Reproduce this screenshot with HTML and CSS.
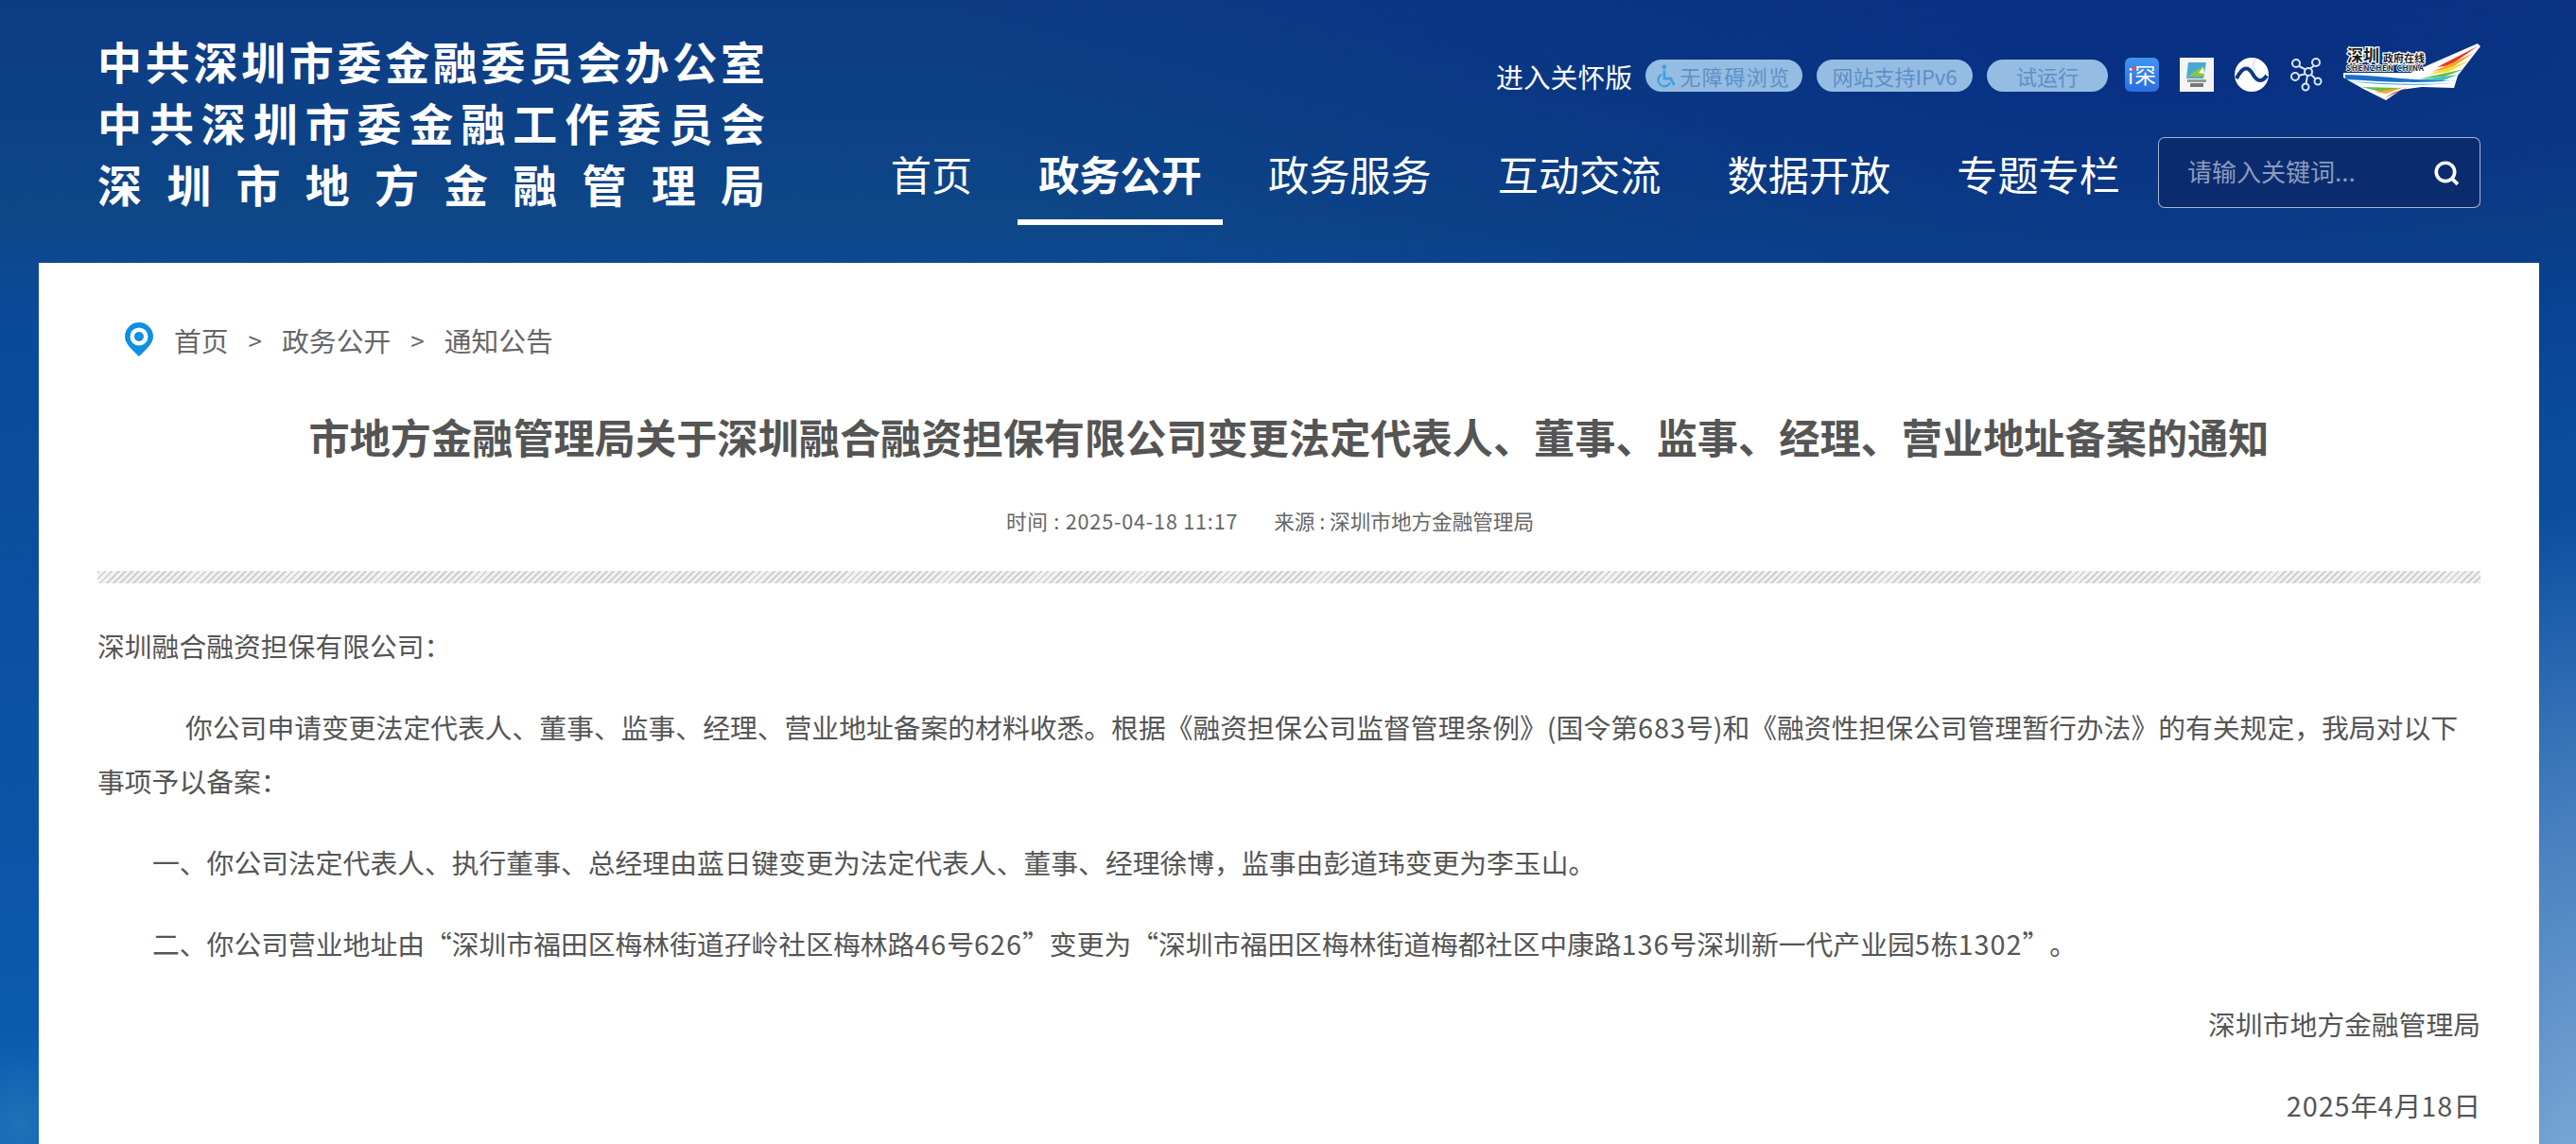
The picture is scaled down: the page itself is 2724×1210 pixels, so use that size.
FILE: index.html
```html
<!DOCTYPE html>
<html lang="zh-CN">
<head>
    <meta charset="UTF-8">
    <meta name="viewport" content="width=device-width, initial-scale=1.0">
    <title>市地方金融管理局关于深圳融合融资担保有限公司变更法定代表人、董事、监事、经理、营业地址备案的通知</title>
    <link rel="stylesheet" href="styles.css">
</head>
<body>
    <header class="header">
        <div class="site-name">
            <div>中共深圳市委金融委员会办公室</div>
            <div>中共深圳市委金融工作委员会</div>
            <div>深圳市地方金融管理局</div>
        </div>
        <div class="header-right">
            <div class="tools">
                <a class="care-link">进入关怀版</a>
                <span class="pill pill-first">
                    <svg class="wheelchair" viewBox="0 0 24 28"><circle cx="9" cy="3" r="2.6" fill="#3f9fe0"/><path d="M9 7v10h8l4 8" fill="none" stroke="#3f9fe0" stroke-width="3"/><path d="M6 12a7.500 7.500 0 1 0 10 10" fill="none" stroke="#3f9fe0" stroke-width="2.600"/></svg>
                    无障碍浏览
                </span>
                <span class="pill pill-second">网站支持IPv6</span>
                <span class="pill pill-last">试运行</span>
                <span class="app-icon app-blue"><span class="app-dot"></span>i<span class="app-char">罙</span></span>
                <svg class="app-icon" viewBox="0 0 36 36"><rect width="36" height="36" fill="#f4f4f2"/><path d="M9 5h19l-3 17H7z" fill="#4aa8d8"/><path d="M8 20L24 9l2 11z" fill="#8cc63f"/><path d="M20 16l5-6 1 7z" fill="#fff"/><rect x="8" y="23" width="20" height="3" fill="#9a9a9a"/><rect x="11" y="27" width="14" height="4" fill="#777"/></svg>
                <svg class="app-icon" viewBox="0 0 36 36"><circle cx="18" cy="18" r="18" fill="#fff"/><path d="M2 22C8 10 14 8 19 17s10 9 15 2" fill="none" stroke="#0b3a86" stroke-width="4"/><path d="M22 1c-4 6-3 10 1 14" fill="none" stroke="#dfe8f4" stroke-width="2"/></svg>
                <svg class="app-icon" viewBox="0 0 36 36" fill="none" stroke="#dbe6f4" stroke-width="2"><circle cx="20" cy="15" r="4"/><circle cx="7" cy="6" r="4"/><circle cx="28" cy="5" r="4"/><circle cx="6" cy="20" r="4"/><circle cx="30" cy="25" r="3.500"/><circle cx="17" cy="31" r="3.500"/><path d="M10 9l7 3.500M26 8.500l-4 3M10 19l7-2M23 18l5 5M19 19l-1.500 8.500"/></svg>
                <svg class="city-logo" viewBox="0 0 146 60">
                    <path d="M1 31H72L143 0 146 3 122 34 118 47 84 46 62 49 46 60 22 48 1 36z" fill="#fff"/>
                    <path d="M143 3L100 25l14-2z" fill="#e8342c"/>
                    <path d="M139 10L95 30l20-4z" fill="#f6a623"/>
                    <path d="M135 18L90 33l22-3z" fill="#f5dd3a"/>
                    <path d="M129 27L82 37l26-2z" fill="#6cbd45"/>
                    <path d="M122 33L74 39l30 1z" fill="#3fc0c8"/>
                    <path d="M3 33c36 0 76 8 113 6-36 4-78 1-113-1z" fill="#1b6fc9"/>
                    <path d="M8 40c30 2 70 4 108 2-30 3-80 2-108-2z" fill="#35a7e0"/>
                    <path d="M20 46l42 1-22 4z" fill="#6cbd45"/>
                    <path d="M34 51l32-5-20 7z" fill="#f6a623"/>
                    <path d="M44 58l26-12-16 6z" fill="#e8342c"/>
                    <text class="logo-cn" x="5" y="19">深圳</text>
                    <text class="logo-small" x="43" y="20">政府在线</text>
                    <text class="logo-en" x="4" y="29" textLength="82">SHENZHEN CHINA</text>
                </svg>
            </div>
            <div class="nav-row">
                <nav class="nav">
                    <a class="nav-item">首页</a>
                    <a class="nav-item active">政务公开</a>
                    <a class="nav-item">政务服务</a>
                    <a class="nav-item">互动交流</a>
                    <a class="nav-item">数据开放</a>
                    <a class="nav-item">专题专栏</a>
                </nav>
                <div class="search">
                    <span class="search-text">请输入关键词...</span>
                    <svg class="search-icon" viewBox="0 0 26 26" fill="none" stroke="#fff" stroke-width="3.400"><circle cx="12" cy="12" r="9"/><path d="M18 18l6 6"/></svg>
                </div>
            </div>
        </div>
    </header>

    <main class="card">
        <div class="crumbs">
            <svg class="pin" viewBox="0 0 30 36"><path d="M15 0a15 15 0 0 1 15 15c0 8-9 15-15 21C9 30 0 23 0 15A15 15 0 0 1 15 0z" fill="#0d8fe3"/><circle cx="15" cy="15" r="9.500" fill="#fff"/><circle cx="15" cy="15" r="5" fill="#0d8fe3"/></svg>
            <span>首页</span><span class="sep">&gt;</span><span>政务公开</span><span class="sep">&gt;</span><span>通知公告</span>
        </div>
        <h1 class="title">市地方金融管理局关于深圳融合融资担保有限公司变更法定代表人、董事、监事、经理、营业地址备案的通知</h1>
        <div class="meta">
            <span class="meta-time">时间 : 2025-04-18 11:17</span>
            <span>来源 : 深圳市地方金融管理局</span>
        </div>
        <div class="stripe"></div>
        <article class="article">
            <p>深圳融合融资担保有限公司：</p>
            <p class="indent-wide">你公司申请变更法定代表人、董事、监事、经理、营业地址备案的材料收悉。根据《融资担保公司监督管理条例》(国令第<span class="num">683</span>号)和《融资性担保公司管理暂行办法》的有关规定，我局对以下事项予以备案：</p>
            <p class="indent">一、你公司法定代表人、执行董事、总经理由蓝日键变更为法定代表人、董事、经理徐博，监事由彭道玮变更为李玉山。</p>
            <p class="indent">二、你公司营业地址由“深圳市福田区梅林街道孖岭社区梅林路<span class="num">46</span>号<span class="num">626</span>”变更为“深圳市福田区梅林街道梅都社区中康路<span class="num">136</span>号深圳新一代产业园<span class="num">5</span>栋<span class="num">1302</span>”。</p>
            <p class="right">深圳市地方金融管理局</p>
            <p class="right"><span class="num">2025</span>年<span class="num">4</span>月<span class="num">18</span>日</p>
        </article>
    </main>
</body>
</html>
```

FILE: styles.css
```css
html, body {
    height: 100%;
}

body {
    margin: 0;
    overflow: hidden;
    font-family: "Noto Sans CJK SC", "Noto Sans", sans-serif;
    color: #555;
    text-spacing-trim: space-all;
    background:
        radial-gradient(ellipse 70px 90px at 20px 1190px, rgba(70, 150, 190, 0.35), transparent),
        radial-gradient(ellipse 1300px 440px at 2300px 50px, rgba(6, 42, 130, 0.75), transparent),
        radial-gradient(ellipse 260px 760px at 100% 1300px, #82b0d8 0, #4a80c0 55%, transparent),
        linear-gradient(180deg, #0c3b84 0, #0e4788 240px, #0a4a98 320px, #0b57aa 1000px, #0b5fb4 1210px);
}

.header {
    display: flex;
    justify-content: space-between;
    height: 278px;
    padding: 0 101px 0 103px;
    box-sizing: border-box;
}

.site-name {
    width: 706px;
    padding-top: 31px;
    color: #fff;
    font-size: 47px;
    font-weight: 700;
    line-height: 65px;
}

.site-name div {
    text-align: justify;
    text-align-last: justify;
}

.header-right {
    display: flex;
    flex-direction: column;
    align-items: flex-end;
}

.tools {
    display: flex;
    align-items: center;
    height: 60px;
    margin-top: 50px;
}

.care-link {
    margin-right: 14px;
    color: #fff;
    font-size: 28.800px;
}

.pill {
    display: flex;
    align-items: center;
    justify-content: center;
    height: 34px;
    margin-right: 15px;
    border-radius: 17px;
    background: #95bce3;
    color: #5c90c6;
    font-size: 22px;
    white-space: nowrap;
}

.pill-first {
    width: 166px;
    gap: 3px;
    letter-spacing: 1.500px;
}

.pill-second {
    width: 165px;
}

.pill-last {
    width: 128px;
    margin-right: 18px;
}

.wheelchair {
    width: 21px;
    height: 25px;
}

.app-icon {
    flex: none;
    width: 36px;
    height: 36px;
    margin-right: 22px;
    margin-bottom: 3px;
}

.app-blue {
    position: relative;
    display: flex;
    align-items: center;
    justify-content: center;
    border-radius: 6px;
    background: linear-gradient(#3f95f2, #2a6fe0);
    color: #fff;
    font-size: 22px;
    line-height: 1;
    overflow: hidden;
}

.app-dot {
    position: absolute;
    left: 7px;
    top: 9px;
    width: 5px;
    height: 4px;
    border-radius: 2px;
    background: #e8505b;
}

.app-char {
    font-size: 23px;
    margin-left: 1px;
}

.city-logo {
    width: 146px;
    height: 60px;
    margin-left: -2px;
    margin-bottom: 8px;
}

.city-logo text {
    fill: #1c1c1c;
    stroke: #fff;
    stroke-width: 2.500px;
    paint-order: stroke;
    font-weight: 700;
}

.city-logo .logo-cn {
    font-size: 17px;
}

.city-logo .logo-small {
    font-size: 11px;
}

.city-logo .logo-en {
    font-size: 8px;
    stroke-width: 1.500px;
}

.nav-row {
    display: flex;
    align-items: flex-start;
    margin-top: 35px;
}

.nav {
    display: flex;
    gap: 26px;
    margin-right: 18px;
}

.nav-item {
    padding: 0 22px;
    height: 93px;
    box-sizing: border-box;
    color: #fff;
    font-size: 43.200px;
    line-height: 76px;
    white-space: nowrap;
}

.nav-item.active {
    font-weight: 700;
    border-bottom: 6px solid #fff;
}

.search {
    display: flex;
    align-items: center;
    justify-content: space-between;
    width: 341px;
    height: 75px;
    padding: 0 21px 0 30px;
    box-sizing: border-box;
    border: 1px solid rgba(255, 255, 255, 0.65);
    border-radius: 7px;
    background: #0a2c6e;
}

.search-text {
    margin-bottom: 4px;
    color: #8c9bbd;
    font-size: 26px;
}

.search-icon {
    width: 28px;
    height: 28px;
}

.card {
    width: 2644px;
    min-height: 932px;
    margin-left: 41px;
    padding: 0 62px;
    box-sizing: border-box;
    background: #fff;
}

.crumbs {
    display: flex;
    align-items: center;
    height: 36px;
    padding: 63px 0 0 29px;
    font-size: 28.800px;
    color: #666;
}

.pin {
    width: 30px;
    height: 36px;
    margin-right: 22px;
}

.sep {
    margin: 0 21px;
    font-size: 26px;
}

.title {
    margin: 54px 0 0;
    color: #555;
    font-size: 43.200px;
    font-weight: 700;
    line-height: 60px;
    text-align: center;
    white-space: nowrap;
}

.meta {
    display: flex;
    justify-content: center;
    gap: 38px;
    margin-top: 43px;
    padding-right: 40px;
    color: #666;
    font-size: 21.600px;
    line-height: 34px;
}

.meta-time {
    letter-spacing: 0.800px;
}

.stripe {
    height: 13px;
    margin-top: 36px;
    background: repeating-linear-gradient(135deg, #d0d0d0 0, #d0d0d0 2px, #f2f2f2 2px, #f2f2f2 5px);
}

.article {
    margin-top: 37px;
    font-size: 28.800px;
    line-height: 57.200px;
}

.article p {
    margin: 0 0 28.600px;
}

.num {
    letter-spacing: 1px;
}

.indent {
    text-indent: 58px;
}

.indent-wide {
    text-indent: 93px;
}

.article .right {
    text-align: right;
}
```
